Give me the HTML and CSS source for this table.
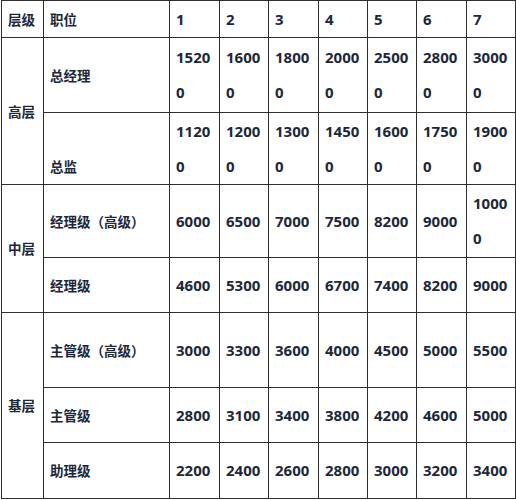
FILE: index.html
```html
<!DOCTYPE html>
<html lang="zh-CN">
<head>
<meta charset="utf-8">
<title>薪资等级表</title>
<link rel="stylesheet" href="styles.css">
</head>
<body>
<table class="grid">
  <colgroup>
    <col class="c-level"><col class="c-pos">
    <col class="c-n"><col class="c-n2"><col class="c-n"><col class="c-n2"><col class="c-n2"><col class="c-n"><col class="c-n2">
  </colgroup>
  <tr class="r-head">
    <td class="label">层级</td><td class="label">职位</td><td>1</td><td>2</td><td>3</td><td>4</td><td>5</td><td>6</td><td>7</td>
  </tr>
  <tr class="r-a">
    <td class="label" rowspan="2">高层</td><td class="label">总经理</td>
    <td>1520<br>0</td><td>1600<br>0</td><td>1800<br>0</td><td>2000<br>0</td><td>2500<br>0</td><td>2800<br>0</td><td>3000<br>0</td>
  </tr>
  <tr class="r-b">
    <td class="label bottom">总监</td>
    <td>1120<br>0</td><td>1200<br>0</td><td>1300<br>0</td><td>1450<br>0</td><td>1600<br>0</td><td>1750<br>0</td><td>1900<br>0</td>
  </tr>
  <tr class="r-c">
    <td class="label" rowspan="2">中层</td><td class="label">经理级（高级）</td>
    <td>6000</td><td>6500</td><td>7000</td><td>7500</td><td>8200</td><td>9000</td><td>1000<br>0</td>
  </tr>
  <tr class="r-d">
    <td class="label">经理级</td>
    <td>4600</td><td>5300</td><td>6000</td><td>6700</td><td>7400</td><td>8200</td><td>9000</td>
  </tr>
  <tr class="r-e">
    <td class="label" rowspan="3">基层</td><td class="label">主管级（高级）</td>
    <td>3000</td><td>3300</td><td>3600</td><td>4000</td><td>4500</td><td>5000</td><td>5500</td>
  </tr>
  <tr class="r-f">
    <td class="label">主管级</td>
    <td>2800</td><td>3100</td><td>3400</td><td>3800</td><td>4200</td><td>4600</td><td>5000</td>
  </tr>
  <tr class="r-g">
    <td class="label">助理级</td>
    <td>2200</td><td>2400</td><td>2600</td><td>2800</td><td>3000</td><td>3200</td><td>3400</td>
  </tr>
</table>
</body>
</html>
```

FILE: styles.css
```css
html, body {
  margin: 0;
  padding: 0;
  background: #ffffff;
}

body {
  padding-left: 1px;
}

.grid {
  border-collapse: collapse;
  table-layout: fixed;
  width: 515px;
  font-family: "Noto Sans", "Noto Sans CJK SC", sans-serif;
  font-weight: 700;
  font-size: 15px;
  color: #1c283a;
}

.grid td {
  border: 1px solid #2e2e2e;
  padding: 0 0 0 6px;
  line-height: 35px;
  vertical-align: middle;
  text-align: left;
  white-space: nowrap;
  overflow: hidden;
}

.grid td.label {
  font-family: "Noto Sans CJK SC", "Noto Sans", sans-serif;
  font-size: 13.5px;
}

.grid td.bottom {
  vertical-align: bottom;
}

.c-level { width: 42px; }
.c-pos { width: 126px; }
.c-n { width: 50px; }
.c-n2 { width: 49px; }

.r-head { height: 37px; }
.r-a { height: 75px; }
.r-b { height: 72px; }
.r-c { height: 73px; }
.r-d { height: 55px; }
.r-e { height: 75px; }
.r-f { height: 55px; }
.r-g { height: 56px; }
```
